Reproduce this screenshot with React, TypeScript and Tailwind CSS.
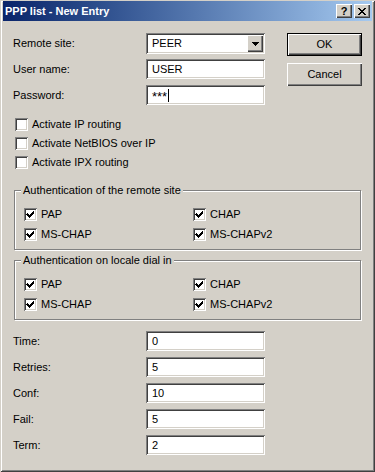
import React, { FC } from 'react';

const sunken =
  'shadow-[inset_1px_1px_0_#808080,inset_-1px_-1px_0_#fff,inset_2px_2px_0_#404040,inset_-2px_-2px_0_#d4d0c8]';
const raised =
  'shadow-[inset_1px_1px_0_#fff,inset_-1px_-1px_0_#404040,inset_-2px_-2px_0_#808080]';

const CheckMark: FC = () => (
  <svg width="13" height="13" viewBox="0 0 13 13" shapeRendering="crispEdges">
    <path d="M3 5h1v1h1v1h1v-1h1v-1h1v-1h1v-1h1v3h-1v1h-1v1h-1v1h-1v1h-1v-1h-1v-1h-1v-1h-1z" fill="#000" />
  </svg>
);

interface CheckProps {
  label: string;
  checked?: boolean;
}

const Check: FC<CheckProps> = ({ label, checked }) => (
  <div className="flex items-center h-[13px]">
    <div className={`w-[13px] h-[13px] bg-white ${sunken}`}>{checked && <CheckMark />}</div>
    <span className="ml-[4px] leading-none">{label}</span>
  </div>
);

const TextField: FC<{ value: string; caret?: boolean; className?: string }> = ({ value, caret, className = '' }) => (
  <div className={`w-[119px] h-[20px] bg-white pl-[6px] flex items-center ${sunken}`}>
    <span className={`leading-none ${className}`}>{value}</span>
    {caret && <span className="w-[1px] h-[13px] bg-black ml-[1px]" />}
  </div>
);

const FieldRow: FC<{ label: string; children: React.ReactNode; className?: string }> = ({
  label,
  children,
  className = '',
}) => (
  <div className={`flex items-center ${className}`}>
    <span className="w-[133px] leading-none">{label}</span>
    {children}
  </div>
);

const GroupBox: FC<{ title: string; className?: string }> = ({ title, className = '' }) => (
  <div
    className={`relative ml-[14px] w-[347px] border border-[#808080] shadow-[1px_1px_0_#fff,inset_1px_1px_0_#fff] pt-[17px] pb-[8px] pl-[9px] ${className}`}
  >
    <span className="absolute left-[6px] -top-[7px] px-[2px] bg-[#d4d0c8] leading-[13px]">{title}</span>
    <div className="grid grid-cols-[169px_1fr] gap-y-[7px]">
      <Check label="PAP" checked />
      <Check label="CHAP" checked />
      <Check label="MS-CHAP" checked />
      <Check label="MS-CHAPv2" checked />
    </div>
  </div>
);

const App: FC = () => {
  return (
    <div
      className={`w-[375px] h-[472px] bg-[#d4d0c8] pt-[1px] text-[11px] text-black font-['Liberation_Sans',Arial,sans-serif] shadow-[inset_1px_1px_0_#d4d0c8,inset_-1px_-1px_0_#404040,inset_2px_2px_0_#fff,inset_-2px_-2px_0_#808080] overflow-hidden`}
    >
      {/* title bar */}
      <div className="mx-[3px] h-[20px] bg-gradient-to-r from-[#0a246a] to-[#a6caf0] flex items-center pl-[2px] pr-[2px]">
        <span className="text-white font-bold leading-none flex-1">PPP list - New Entry</span>
        <div className={`w-[16px] h-[14px] bg-[#d4d0c8] flex items-center justify-center font-bold text-[11px] leading-none ${raised}`}>
          ?
        </div>
        <div className={`ml-[2px] w-[16px] h-[14px] bg-[#d4d0c8] flex items-center justify-center ${raised}`}>
          <svg width="8" height="7" viewBox="0 0 8 7" shapeRendering="crispEdges">
            <path
              d="M0 0h2v1h1v1h2v-1h1v-1h2v1h-1v1h-1v1h-1v1h1v1h1v1h1v1h-2v-1h-1v-1h-2v1h-1v1h-2v-1h1v-1h1v-1h1v-1h-1v-1h-1v-1h-1z"
              fill="#000"
            />
          </svg>
        </div>
      </div>

      {/* upper fields + buttons */}
      <div className="flex pt-[12px] pl-[13px]">
        <div className="flex flex-col">
          <FieldRow label="Remote site:">
            <div className={`w-[119px] h-[21px] bg-white pl-[6px] pr-[2px] flex items-center ${sunken}`}>
              <span className="flex-1 leading-none">PEER</span>
              <div className={`w-[16px] h-[17px] bg-[#d4d0c8] flex items-center justify-center ${raised}`}>
                <svg width="7" height="4" viewBox="0 0 7 4" shapeRendering="crispEdges">
                  <path d="M0 0h7v1h-1v1h-1v1h-1v1h-1v-1h-1v-1h-1v-1h-1z" fill="#000" />
                </svg>
              </div>
            </div>
          </FieldRow>
          <FieldRow label="User name:" className="mt-[5px]">
            <TextField value="USER" />
          </FieldRow>
          <FieldRow label="Password:" className="mt-[6px]">
            <TextField value="***" caret className="text-[13px] pt-[3px]" />
          </FieldRow>
          <div className="flex flex-col gap-[6px] mt-[13px] pl-[2px]">
            <Check label="Activate IP routing" />
            <Check label="Activate NetBIOS over IP" />
            <Check label="Activate IPX routing" />
          </div>
        </div>
        <div className="flex flex-col ml-[22px]">
          <div className="w-[75px] h-[23px] border border-black">
            <div className={`w-full h-full flex items-center justify-center leading-none ${raised}`}>OK</div>
          </div>
          <div className={`mt-[7px] w-[75px] h-[23px] flex items-center justify-center leading-none ${raised}`}>
            Cancel
          </div>
        </div>
      </div>

      {/* authentication groups */}
      <GroupBox title="Authentication of the remote site" className="mt-[21px]" />
      <GroupBox title="Authentication on locale dial in" className="mt-[10px]" />

      {/* timing values */}
      <div className="flex flex-col gap-[6px] pl-[13px] mt-[11px]">
        <FieldRow label="Time:">
          <TextField value="0" />
        </FieldRow>
        <FieldRow label="Retries:">
          <TextField value="5" />
        </FieldRow>
        <FieldRow label="Conf:">
          <TextField value="10" />
        </FieldRow>
        <FieldRow label="Fail:">
          <TextField value="5" />
        </FieldRow>
        <FieldRow label="Term:">
          <TextField value="2" />
        </FieldRow>
      </div>
    </div>
  );
};

export default App;
